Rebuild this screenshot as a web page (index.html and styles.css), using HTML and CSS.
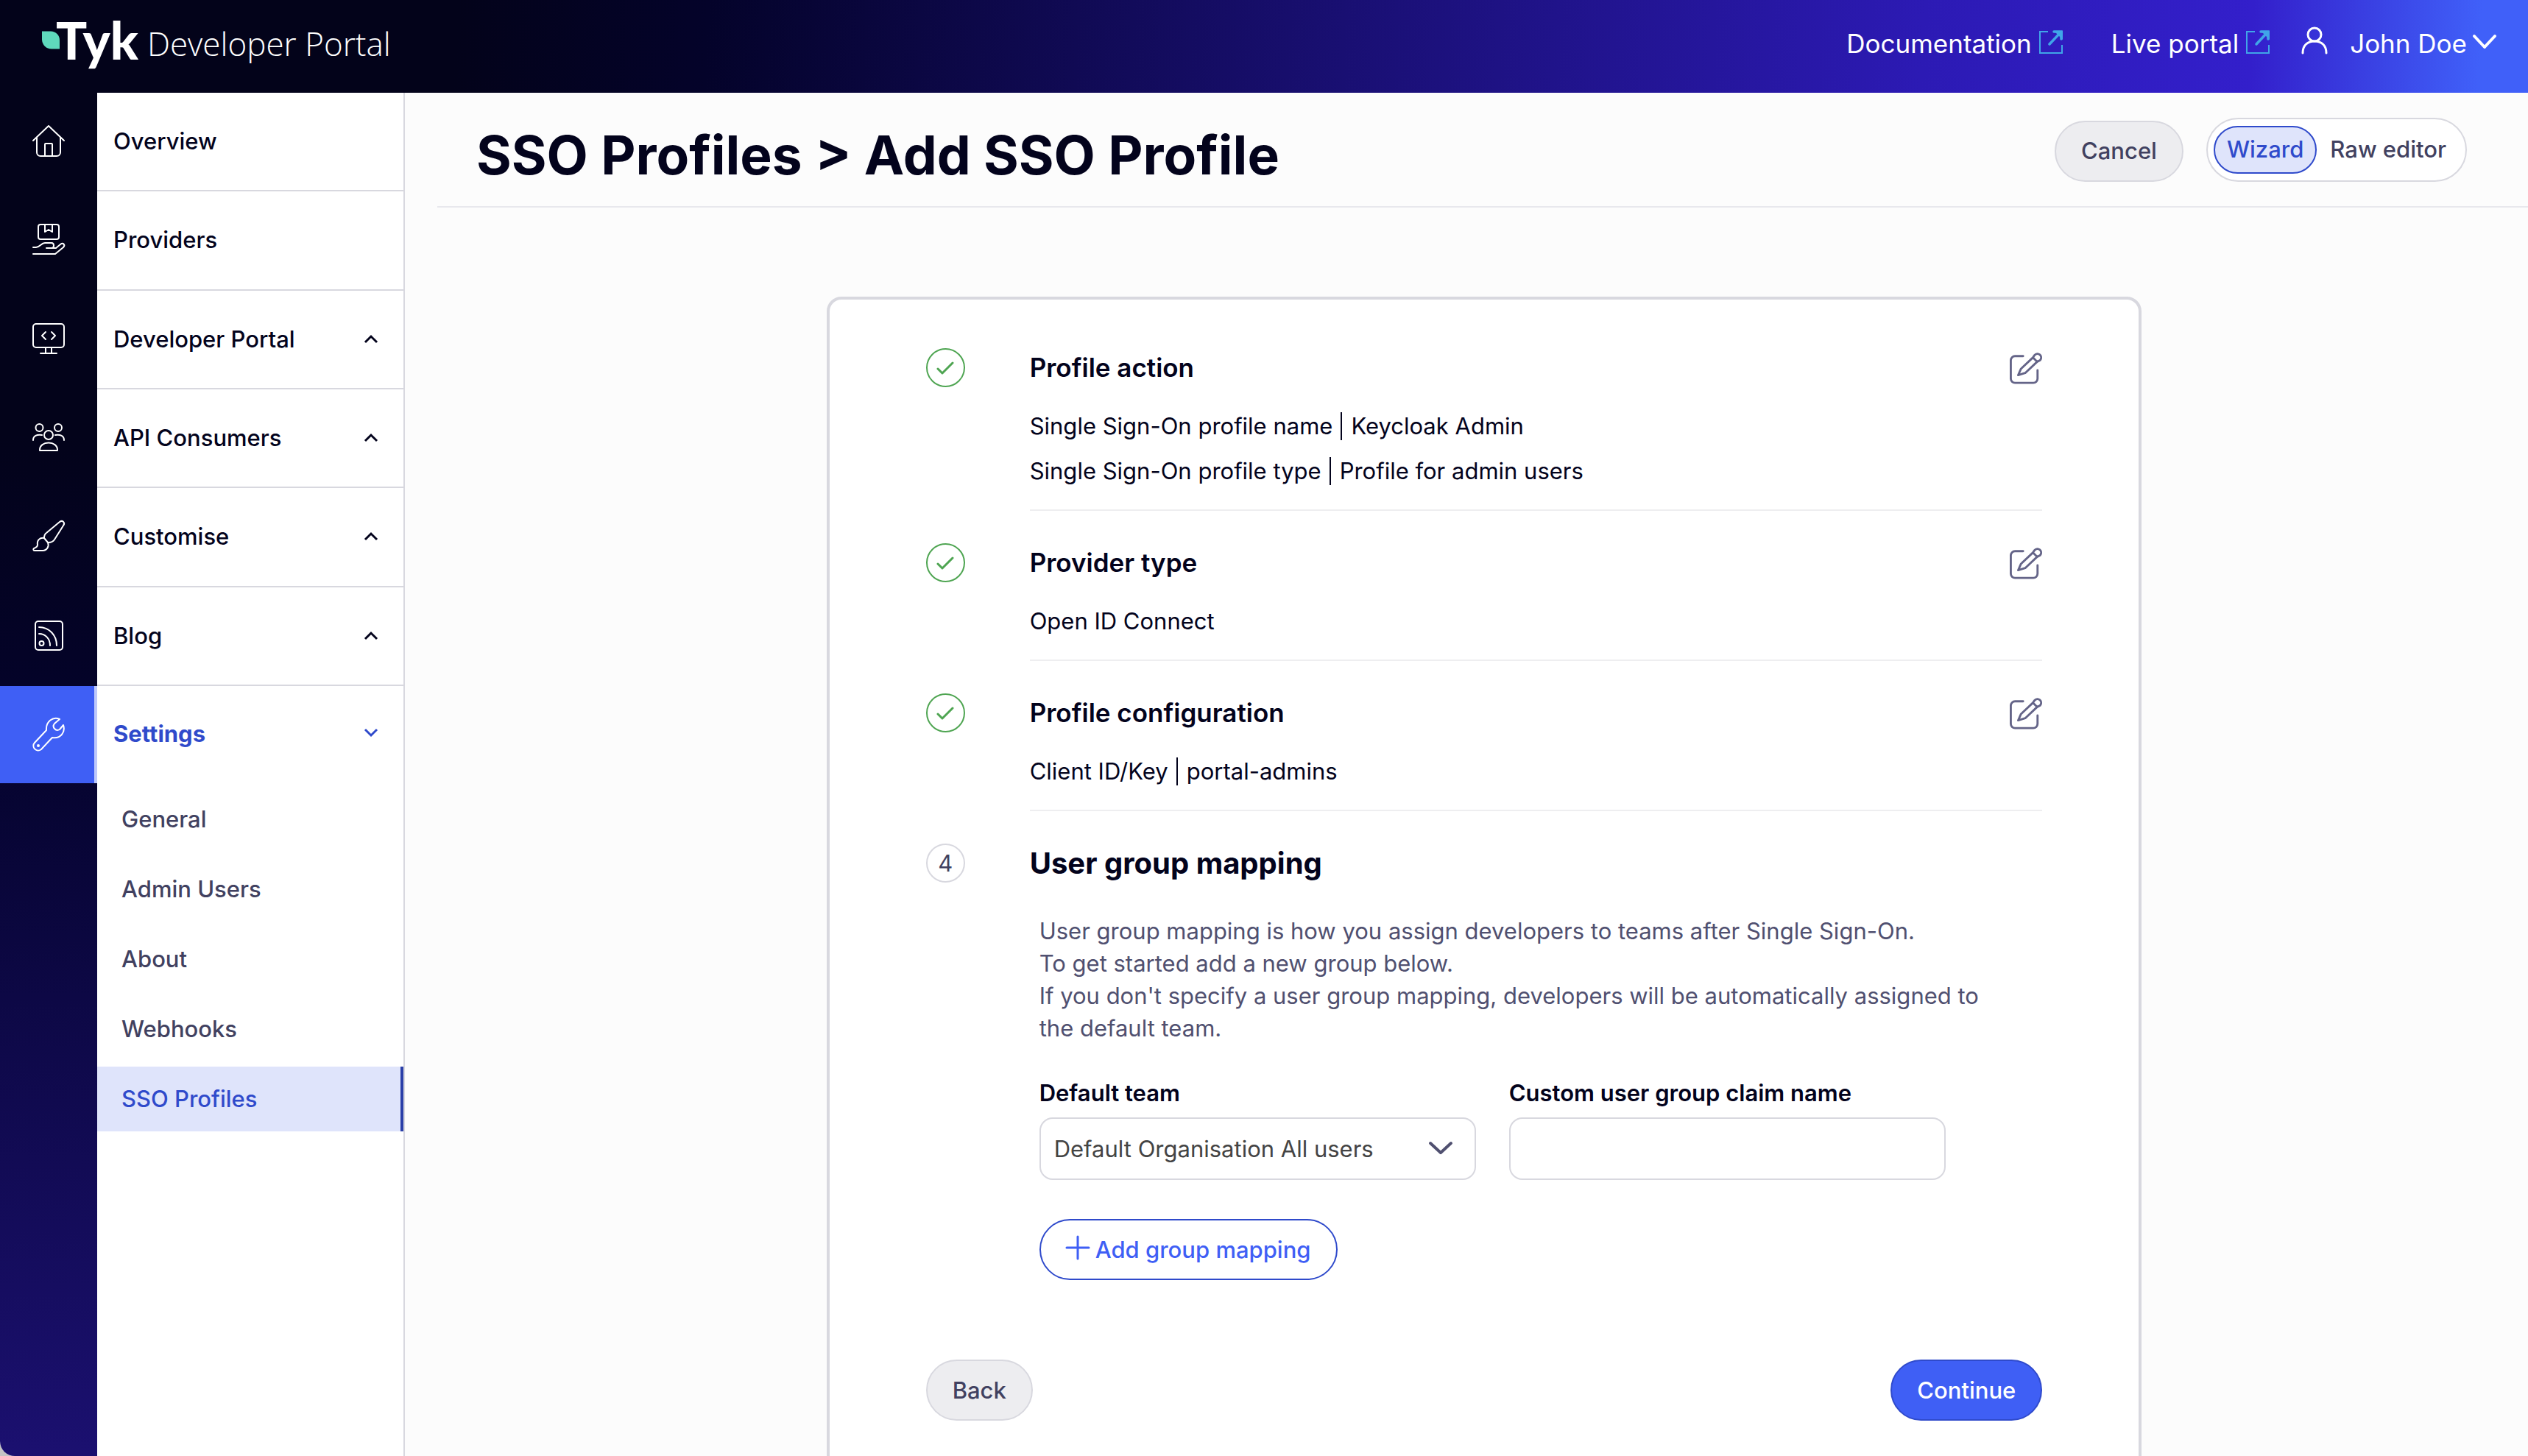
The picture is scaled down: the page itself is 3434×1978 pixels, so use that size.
FILE: index.html
```html
<!DOCTYPE html>
<html lang="en">
<head>
<meta charset="utf-8">
<title>Tyk Developer Portal</title>
<link rel="stylesheet" href="styles.css">
</head>
<body>
<svg class="sprite" aria-hidden="true">
  <symbol id="i-up" viewBox="0 0 20 14"><path d="M2 12L10 4l8 8"/></symbol>
  <symbol id="i-check" viewBox="0 0 24 20"><path d="M2 11l6 6L22 3"/></symbol>
  <symbol id="i-edit" viewBox="0 0 46 46"><path d="M19 6H7.500a6 6 0 0 0-6 6v26a6 6 0 0 0 6 6h26a6 6 0 0 0 6-6V26M33 8L16 24l-4 9 10-3L39 14zM33 8l2-3c5-6 13 1 8 7L39 14z"/></symbol>
  <symbol id="i-ext" viewBox="0 0 32 32"><path stroke-width="2" d="M12 2H1v29h30V20"/><path stroke-width="3.500" stroke-linecap="round" d="M14 19L29 3M20 2h10v10"/><path fill="currentColor" stroke="none" d="M20 1h12v12z"/></symbol>
</svg>
<div class="app">
  <header class="topbar">
    <a class="brand" href="#">
      <svg class="brand-leaf" viewBox="0 0 24 24"><path fill="#5fd9bc" d="M0 0h12a12 12 0 0 1 12 12v12H13A13 13 0 0 1 0 11z"/></svg>
      <span class="brand-name">Tyk</span>
      <span class="brand-sub">Developer Portal</span>
    </a>
    <nav class="toplinks">
      <a class="toplink" href="#">Documentation<svg class="ext"><use href="#i-ext"/></svg></a>
      <a class="toplink" href="#">Live portal<svg class="ext"><use href="#i-ext"/></svg></a>
      <button class="user" type="button">
        <svg class="user-icon" viewBox="0 0 36 36"><ellipse cx="18" cy="10" rx="9" ry="9"/><path d="M2 35c0-10 6-16 16-16s16 6 16 16"/></svg>
        John Doe
        <svg class="user-chevron" viewBox="0 0 32 20"><path d="M2 2l14 15L30 2"/></svg>
      </button>
    </nav>
  </header>
  <div class="body">
    <nav class="sidebar">
      <div class="rows">
        <a class="row" href="#"><span class="rail"><svg class="icon" viewBox="0 0 44 44"><path d="M1 22L22 2l21 20M6 18v20a5 5 0 0 0 5 5h22a5 5 0 0 0 5-5V18M17 42V27a1 1 0 0 1 1-1h8a1 1 0 0 1 1 1v15"/></svg></span><span class="label">Overview</span></a>
        <a class="row" href="#"><span class="rail"><svg class="icon" viewBox="0 0 44 44"><rect x="8" y="2" width="28" height="20" rx="3"/><path d="M17 3v9l5-3 5 3V3M1 33h4c5 0 7-6 12-6h9c4 0 4 7 0 7h-7 13l6-5c4-3 7 1 4 4L31 42H1"/></svg></span><span class="label">Providers</span></a>
        <a class="row" href="#"><span class="rail"><svg class="icon" viewBox="0 0 44 44"><rect x="1" y="2" width="42" height="32" rx="4"/><path d="M18 13l-5 5 5 5M26 13l5 5-5 5M18 35v6M26 35v6M11 42h22"/></svg></span><span class="label">Developer Portal<svg class="chev"><use href="#i-up"/></svg></span></a>
        <a class="row" href="#"><span class="rail"><svg class="icon" viewBox="0 0 44 44"><circle cx="9.500" cy="9" r="5"/><circle cx="35" cy="9" r="5"/><circle cx="22" cy="19" r="6"/><path d="M1 26c0-6 5-8 12-7M43 26c0-6-5-8-12-7M10 40c-1-14 25-14 24 0z"/></svg></span><span class="label">API Consumers<svg class="chev"><use href="#i-up"/></svg></span></a>
        <a class="row" href="#"><span class="rail"><svg class="icon" viewBox="0 0 44 44"><path d="M16 25c0-3 0-5 3-7L37 3c4-3 8 1 5 5L30 27c-2 3-4 4-8 4M16 25c-6-1-10 3-9 9 0 3-2 4-5 5-1 1-1 3 1 3h11c6 0 9-6 7-11z"/></svg></span><span class="label">Customise<svg class="chev"><use href="#i-up"/></svg></span></a>
        <a class="row" href="#"><span class="rail"><svg class="icon" viewBox="0 0 44 44"><rect x="4" y="3" width="37" height="39" rx="4"/><circle cx="12.500" cy="33" r="3"/><path d="M9 20c9 0 15 7 15 16M9 11c14 0 24 11 24 25"/></svg></span><span class="label">Blog<svg class="chev"><use href="#i-up"/></svg></span></a>
      </div>
      <a class="row row-active" href="#"><span class="rail"><svg class="icon" viewBox="0 0 44 44"><path d="M37 1C28-3 18 4 19 16L3 33c-5 6 3 14 9 9l15-16c12 2 18-8 15-17l-5 6c-5 3-11-3-7-8z"/><circle cx="8" cy="37" r="1"/></svg></span><span class="label">Settings<svg class="chev chev-down"><use href="#i-up"/></svg></span></a>
      <div class="submenu">
        <a class="sub" href="#">General</a>
        <a class="sub" href="#">Admin Users</a>
        <a class="sub" href="#">About</a>
        <a class="sub" href="#">Webhooks</a>
        <a class="sub sub-active" href="#">SSO Profiles</a>
      </div>
    </nav>
    <main class="main">
      <div class="pagehead">
        <h1 class="title">SSO Profiles &gt; Add SSO Profile</h1>
        <div class="actions">
          <button class="btn btn-grey" type="button">Cancel</button>
          <div class="toggle">
            <button class="seg seg-on" type="button">Wizard</button>
            <button class="seg" type="button">Raw editor</button>
          </div>
        </div>
      </div>
      <div class="stage">
        <div class="card">
          <section class="step">
            <span class="mark mark-done"><svg class="tick"><use href="#i-check"/></svg></span>
            <div class="step-body">
              <div class="step-head"><h2 class="step-title">Profile action</h2><button class="edit" type="button" aria-label="Edit profile action"><svg class="edit-icon"><use href="#i-edit"/></svg></button></div>
              <p class="fact"><span>Single Sign-On profile name</span><span class="fact-value">Keycloak Admin</span></p>
              <p class="fact"><span>Single Sign-On profile type</span><span class="fact-value">Profile for admin users</span></p>
            </div>
          </section>
          <section class="step">
            <span class="mark mark-done"><svg class="tick"><use href="#i-check"/></svg></span>
            <div class="step-body">
              <div class="step-head"><h2 class="step-title">Provider type</h2><button class="edit" type="button" aria-label="Edit provider type"><svg class="edit-icon"><use href="#i-edit"/></svg></button></div>
              <p class="fact"><span>Open ID Connect</span></p>
            </div>
          </section>
          <section class="step">
            <span class="mark mark-done"><svg class="tick"><use href="#i-check"/></svg></span>
            <div class="step-body">
              <div class="step-head"><h2 class="step-title">Profile configuration</h2><button class="edit" type="button" aria-label="Edit profile configuration"><svg class="edit-icon"><use href="#i-edit"/></svg></button></div>
              <p class="fact"><span>Client ID/Key</span><span class="fact-value">portal-admins</span></p>
            </div>
          </section>
          <section class="step">
            <span class="mark">4</span>
            <div class="step-current">
              <h2 class="step-title step-title-current">User group mapping</h2>
              <div class="mapping">
                <p class="help">User group mapping is how you assign developers to teams after Single Sign-On.<br>To get started add a new group below.<br>If you don't specify a user group mapping, developers will be automatically assigned to the default team.</p>
                <div class="fields">
                  <div class="field">
                    <label class="field-label" for="team">Default team</label>
                    <div class="select-wrap">
                      <select class="control" id="team"><option>Default Organisation All users</option></select>
                      <svg class="select-chevron" viewBox="0 0 32 20"><path d="M2 3l14 13L30 3"/></svg>
                    </div>
                  </div>
                  <div class="field">
                    <label class="field-label" for="claim">Custom user group claim name</label>
                    <input class="control" id="claim" type="text">
                  </div>
                </div>
                <button class="btn btn-outline" type="button"><svg class="plus" viewBox="0 0 32 32"><path d="M16 1v30M1 16h30"/></svg>Add group mapping</button>
              </div>
            </div>
          </section>
          <div class="footer">
            <button class="btn btn-grey" type="button">Back</button>
            <button class="btn btn-primary" type="button">Continue</button>
          </div>
        </div>
      </div>
    </main>
  </div>
</div>
</body>
</html>
```
FILE: styles.css
```css
* { box-sizing: border-box; }
body { margin: 0; background: #c4c4c4; color: #03031c; font: 400 31px/44px Inter, "Liberation Sans", sans-serif; }
a { color: inherit; text-decoration: none; }
h1, h2, p { margin: 0; }
button { font: inherit; color: inherit; background: none; border: 0; padding: 0; }
svg { fill: none; stroke: currentColor; stroke-width: 3; stroke-linecap: round; stroke-linejoin: round; flex: none; overflow: visible; }
.sprite { position: absolute; width: 0; height: 0; }

.app { display: flex; flex-direction: column; height: 100vh; overflow: hidden; background: #fcfcfc; border-bottom-left-radius: 20px; }
.topbar { display: flex; justify-content: space-between; align-items: center; flex: none; height: 126px; padding: 0 43px 8px 57px; color: #fff; background: linear-gradient(93deg, #03031a 18%, #04032a 28%, #2c1ab4 76%, #331fcb 89%, #4060f9 98%); }
.brand { display: flex; align-items: center; }
.brand-leaf { width: 24px; height: 25px; stroke: none; margin-bottom: 10px; margin-right: -5px; }
.brand-name { font: 900 70px/80px Lato, sans-serif; margin-bottom: 10px; }
.brand-sub { margin-left: 12px; font: 300 44px/80px "Open Sans", sans-serif; }
.toplinks { display: flex; align-items: center; font-size: 35px; }
.toplink { display: flex; align-items: center; gap: 10px; margin-right: 66px; }
.toplink + .toplink { margin-right: 43px; }
.ext { width: 32px; height: 32px; color: #40a5e8; stroke-linecap: butt; stroke-linejoin: miter; margin-bottom: 4px; }
.user { display: flex; align-items: center; }
.user-icon { width: 36px; height: 36px; margin-right: 30px; margin-bottom: 8px; }
.user-chevron { width: 32px; height: 20px; margin-left: 8px; margin-bottom: 4px; stroke-width: 4; }

.body { display: flex; flex: 1; min-height: 0; }
.sidebar { flex: none; width: 550px; border-right: 2px solid #d8d8df; background: linear-gradient(#03031a 25%, #04032a 45%, #1b1070 100%) left / 132px 100% no-repeat, #fff; }
.rows { display: grid; grid-auto-rows: 1fr; height: 806px; }
.row { display: flex; font-weight: 500; }
.rail { display: flex; align-items: center; justify-content: center; width: 132px; padding-bottom: 4px; color: #fff; }
.icon { width: 44px; height: 44px; stroke-width: 2; }
.label { display: flex; flex: 1; align-items: center; justify-content: space-between; padding: 0 34px 0 22px; border-bottom: 2px solid #d8d8df; }
.chev { width: 20px; height: 14px; margin-bottom: 2px; stroke-linecap: butt; stroke-linejoin: miter; }
.chev-down { transform: rotate(180deg); }
.row-active { height: 132px; color: #2f4acb; font-weight: 700; }
.row-active .rail { background: #3f5ff5; border-right: 4px solid #bdc8fb; padding-left: 4px; padding-bottom: 0; }
.row-active .label { border-bottom: 0; padding-bottom: 2px; }
.submenu { display: flex; flex-direction: column; gap: 7px; margin: 5px 0 0 132px; color: #414160; font-weight: 500; }
.sub { padding: 22px 33px; }
.sub-active { color: #2f4acb; background: #dfe4fb; border-right: 4px solid #2a3fa8; }

.main { flex: 1; min-width: 0; padding-left: 44px; overflow: hidden; }
.pagehead { display: flex; align-items: center; justify-content: space-between; height: 156px; padding: 0 83px 0 53px; border-bottom: 2px solid #e8e8ed; }
.title { font-size: 73px; line-height: 88px; font-weight: 700; padding-top: 16px; }
.actions { display: flex; align-items: flex-end; gap: 31px; }
.btn { display: flex; align-items: center; height: 83px; padding: 0 34px; border: 2px solid; border-radius: 42px; font-weight: 500; }
.btn-grey { background: #ededf0; border-color: #d8d8df; color: #414160; }
.btn-primary { background: #3f5ff5; border-color: #2f4acb; color: #fff; }
.btn-outline { border-color: #2f4acb; color: #3f5ff5; gap: 8px; margin-top: 53px; }
.plus { width: 32px; height: 32px; margin-bottom: 6px; }
.toggle { display: flex; align-items: center; height: 87px; padding: 0 8px; background: #fff; border: 2px solid #d8d8df; border-radius: 44px; }
.seg { height: 65px; padding: 0 16px; border: 2px solid transparent; border-radius: 33px; color: #414160; font-weight: 500; }
.seg-on { background: #dfe4fb; border-color: #2f4acb; color: #2f4acb; }

.stage { display: flex; justify-content: center; padding: 121px 0 0 4px; }
.card { width: 63%; padding: 66px 131px 132px; background: #fff; border: 4px solid #d8d8df; border-radius: 20px; }
.step { display: flex; gap: 88px; }
.mark { display: flex; align-items: center; justify-content: center; flex: none; width: 53px; height: 53px; border: 2px solid #d8d8df; border-radius: 50%; color: #414160; }
.mark-done { border-color: #4fa552; color: #4fa552; }
.tick { width: 24px; height: 20px; }
.step-body { flex: 1; padding-bottom: 22px; margin-bottom: 44px; border-bottom: 2px solid #eeeef0; }
.step-head { display: flex; align-items: center; justify-content: space-between; height: 53px; margin-bottom: 22px; }
.step-title { font-size: 35px; line-height: 53px; font-weight: 600; }
.step-title-current { font-size: 40px; font-weight: 700; }
.edit { display: flex; color: #646488; }
.edit-icon { width: 44px; height: 44px; }
.fact { display: flex; align-items: center; height: 61px; }
.fact-value { margin-left: 11px; padding-left: 12px; border-left: 2px solid; line-height: 38px; }
.step-current { flex: 1; }
.mapping { padding-left: 13px; margin-top: 44px; color: #505070; }
.help { padding-right: 66px; }
.fields { display: flex; gap: 45px; margin-top: 44px; }
.field { display: flex; flex-direction: column; gap: 11px; width: 593px; }
.field-label { font-weight: 600; color: #03031c; }
.select-wrap { position: relative; }
.control { display: block; width: 100%; height: 85px; padding: 0 18px; font: inherit; color: #444; background: #fff; border: 2px solid #d8d8df; border-radius: 18px; appearance: none; }
.select-chevron { position: absolute; right: 32px; top: 32px; width: 32px; height: 20px; stroke-width: 4; pointer-events: none; }
.footer { display: flex; justify-content: space-between; margin-top: 108px; }
```
